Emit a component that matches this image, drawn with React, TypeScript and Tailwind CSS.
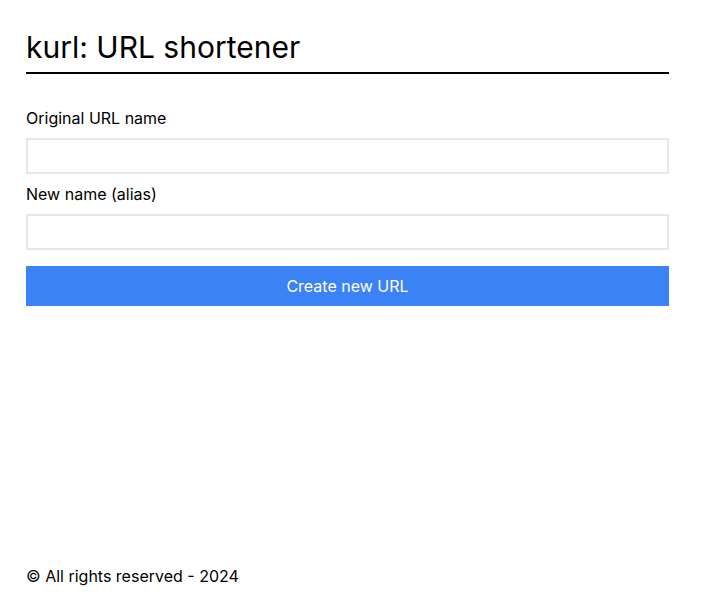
export default function App() {
  return (
    <div className="flex min-h-screen flex-col bg-white text-black" style={{ fontFamily: "Inter, 'Noto Sans', sans-serif" }}>
      <main className="ml-[26px] w-[643px]">
        <h1 className="mt-[29px] border-b-2 border-black pb-[7px] text-3xl leading-9">kurl: URL shortener</h1>
        <form className="mt-8 flex flex-col" onSubmit={(e) => e.preventDefault()}>
          <label className="text-base leading-6">Original URL name</label>
          <input className="mt-2 h-9 border-2 border-[#e5e7eb] px-2 outline-none" />
          <label className="mt-2 text-base leading-6">New name (alias)</label>
          <input className="mt-2 h-9 border-2 border-[#e5e7eb] px-2 outline-none" />
          <button className="mt-4 h-10 bg-[#3b82f6] text-base text-white">Create new URL</button>
        </form>
      </main>
      <footer className="ml-[26px] mt-auto pb-[10px] text-base leading-6">© All rights reserved - 2024</footer>
    </div>
  );
}
